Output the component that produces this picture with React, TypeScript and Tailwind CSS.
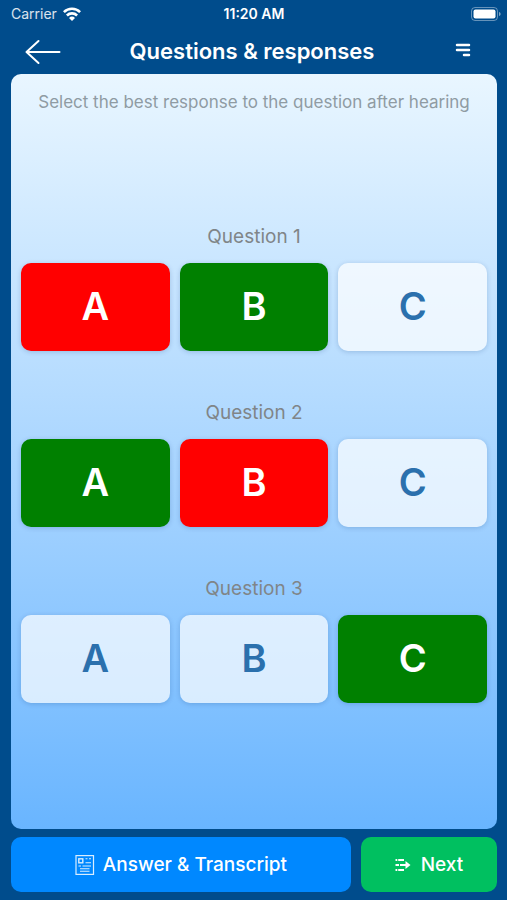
import React, { useState } from 'react';

type Mark = 'right' | 'wrong' | 'none';

interface Question {
    id: number;
    marks: Mark[];
}

const LETTERS = ['A', 'B', 'C'];

const QUESTIONS: Question[] = [
    { id: 1, marks: ['wrong', 'right', 'none'] },
    { id: 2, marks: ['right', 'wrong', 'none'] },
    { id: 3, marks: ['none', 'none', 'right'] },
];

const MARK_STYLES: Record<Mark, string> = {
    right: 'bg-[#008000] text-white',
    wrong: 'bg-[#ff0000] text-white',
    none: 'bg-white/70 text-[#2b70ad]',
};

const WifiIcon: React.FC = () => (
    <svg width="18" height="14" viewBox="0 0 18 14" fill="none" stroke="white" strokeWidth="2.6" aria-hidden="true">
        <path d="M0.9 5.1a11.6 11.6 0 0 1 16.2 0" />
        <path d="M3.9 8.5a7.3 7.3 0 0 1 10.2 0" />
        <path d="M9 14L6 11a4.3 4.3 0 0 1 6 0z" fill="white" stroke="none" />
    </svg>
);

const BatteryIcon: React.FC = () => (
    <svg width="30" height="14" viewBox="0 0 30 14" fill="none" aria-hidden="true">
        <rect x="0.5" y="0.5" width="26" height="13" rx="3.5" stroke="white" strokeOpacity="0.4" />
        <rect x="2.5" y="2.5" width="22" height="9" rx="2" fill="white" />
        <path d="M28 5v4c1-.3 1.6-1.1 1.6-2S29 5.3 28 5z" fill="white" fillOpacity="0.5" />
    </svg>
);

const BackIcon: React.FC = () => (
    <svg width="36" height="26" viewBox="0 0 36 26" fill="none" stroke="white" strokeWidth="2" strokeLinecap="round" strokeLinejoin="round" aria-hidden="true">
        <path d="M34.5 13H1.5M13.5 2L1.5 13L13.5 24" />
    </svg>
);

const MenuIcon: React.FC = () => (
    <svg width="16" height="14" viewBox="0 0 16 14" fill="none" stroke="white" strokeWidth="2.5" strokeLinecap="round" aria-hidden="true">
        <path d="M2 2h12M2 7h12M9 12h5" />
    </svg>
);

const TranscriptIcon: React.FC = () => (
    <svg width="20" height="20" viewBox="0 0 20 20" fill="none" stroke="white" strokeOpacity="0.85" aria-hidden="true">
        <rect x="1" y="0.6" width="17.5" height="18.8" strokeWidth="1.2" />
        <rect x="3.8" y="3.8" width="4" height="4" strokeWidth="1.4" />
        <path d="M10.5 3.8h2M14 3.8h2M10.5 7.8h5.5M3.5 11h2.5M7.5 11h8.5M5 13.8h9.5M5 16.3h9.5" strokeWidth="1.1" />
    </svg>
);

const NextIcon: React.FC = () => (
    <svg width="16" height="14" viewBox="0 0 16 14" fill="none" stroke="white" strokeWidth="2.2" aria-hidden="true">
        <path d="M0.5 2h1.8M3.2 2H9M0.5 7h3.5M5 7h7M0.5 12h1.8M3.2 12H9" />
        <path d="M10.5 3L15.5 7L10.5 11z" fill="white" stroke="none" />
    </svg>
);

const QuestionRow: React.FC<{ question: Question; onPick: (index: number) => void }> = ({ question, onPick }) => (
    <section>
        <h2 className="text-center text-[19px] leading-6 text-[#808588]">Question {question.id}</h2>
        <div className="mt-3.5 grid grid-cols-3 gap-2.5">
            {LETTERS.map((letter, i) => (
                <button
                    key={letter}
                    type="button"
                    onClick={() => onPick(i)}
                    className={`h-[88px] rounded-[10px] text-[38px] font-semibold shadow-[0_1px_5px_rgba(0,50,110,0.2)] ${MARK_STYLES[question.marks[i]]}`}
                >
                    {letter}
                </button>
            ))}
        </div>
    </section>
);

export default function App() {
    const [questions, setQuestions] = useState(QUESTIONS);

    const handlePick = (id: number, index: number) => {
        setQuestions(prev => prev.map(q => (
            q.id === id && q.marks[index] === 'none'
                ? { ...q, marks: q.marks.map((m, i) => (i === index ? 'wrong' : m)) }
                : q
        )));
    };

    return (
        <main className="flex min-h-screen flex-col bg-[#004c8c] pr-2.5 pb-2 pl-[11px] font-[Inter,'Liberation_Sans',sans-serif]">
            {/* Status bar */}
            <div className="grid h-7 grid-cols-3 items-center text-[14px] leading-5 text-white">
                <div className="flex items-center gap-1.5">
                    <span className="text-white/85">Carrier</span>
                    <WifiIcon />
                </div>
                <span className="text-center font-semibold">11:20 AM</span>
                <div className="-mr-1 flex justify-end"><BatteryIcon /></div>
            </div>

            {/* Title bar */}
            <header className="flex h-[46px] items-center justify-between px-3.5 text-white">
                <button type="button" aria-label="Back" className="pt-0.5"><BackIcon /></button>
                <h1 className="text-[22px] font-semibold">Questions & responses</h1>
                <button type="button" aria-label="Menu" className="px-3 pb-0.5"><MenuIcon /></button>
            </header>

            <div className="flex flex-1 flex-col rounded-[10px] bg-linear-to-b from-[#e9f6ff] to-[#69b5ff] px-2.5">
                <p className="pt-4 text-center text-[17px] leading-6 text-[#8f9ba3]">
                    Select the best response to the question after hearing
                </p>
                <div className="flex flex-1 flex-col justify-center gap-[50px] pb-4">
                    {questions.map(q => (
                        <QuestionRow key={q.id} question={q} onPick={i => handlePick(q.id, i)} />
                    ))}
                </div>
            </div>

            <footer className="mt-2 flex gap-2.5 text-[19px] font-medium text-white">
                <button type="button" className="flex h-[55px] flex-1 items-center justify-center gap-2 rounded-[10px] bg-[#0088ff]">
                    <TranscriptIcon />
                    <span className="pt-0.5">Answer & Transcript</span>
                </button>
                <button type="button" className="flex h-[55px] w-[28%] items-center justify-center gap-2.5 rounded-[10px] bg-[#00c060]">
                    <NextIcon />
                    <span className="pt-0.5">Next</span>
                </button>
            </footer>
        </main>
    );
}
